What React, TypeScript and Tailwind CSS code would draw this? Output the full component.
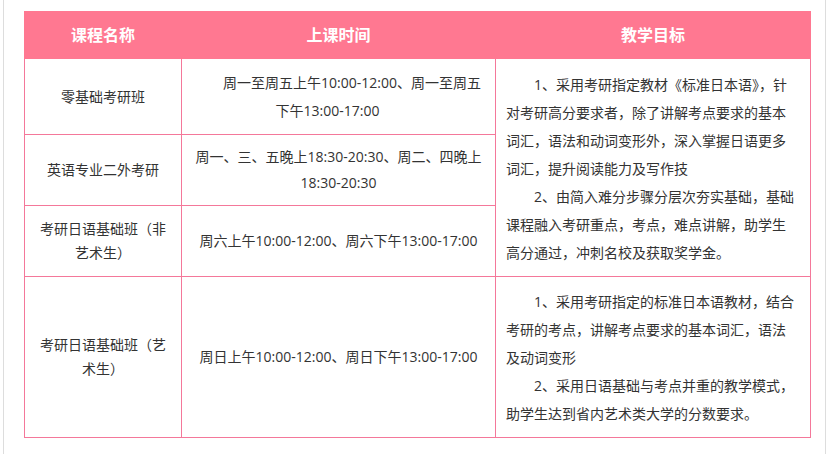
const border = "border border-[#f4789a]";

export default function App() {
  return (
    <div className="ml-[3px] h-[454px] w-[823px] border-x border-[#dddddd] bg-white pl-[20px] pt-[11px] font-['Open_Sans','Noto_Sans_CJK_SC',sans-serif] text-[14px] text-[#333333]">
      <table className="table-fixed border-collapse" style={{ width: 786 }}>
        <colgroup>
          <col className="w-[157px]" />
          <col className="w-[314px]" />
          <col className="w-[315px]" />
        </colgroup>
        <thead>
          <tr className="h-[47px] bg-[#ff7891] text-[16px] font-bold text-white">
            <th className="border border-[#ff7891] text-center">课程名称</th>
            <th className="border border-[#ff7891] text-center">上课时间</th>
            <th className="border border-[#ff7891] text-center">教学目标</th>
          </tr>
        </thead>
        <tbody>
          <tr className="h-[76px]">
            <td className={`${border} px-[12px] text-center align-middle leading-[24px]`}>零基础考研班</td>
            <td className={`${border} px-[8px] text-center align-middle leading-[28px]`}>
              <div className="pl-[27px]">周一至周五上午10:00-12:00、周一至周五</div>
              <div className="pr-[22px]">下午13:00-17:00</div>
            </td>
            <td rowSpan={3} className={`${border} pl-[10px] pr-[13px] pt-[2px] align-middle leading-[28px]`}>
              <p className="indent-[28px]">
                1、采用考研指定教材《标准日本语》，针对考研高分要求者，除了讲解考点要求的基本词汇，语法和动词变形外，深入掌握日语更多词汇，提升阅读能力及写作技
              </p>
              <p className="indent-[28px]">
                2、由简入难分步骤分层次夯实基础，基础课程融入考研重点，考点，难点讲解，助学生高分通过，冲刺名校及获取奖学金。
              </p>
            </td>
          </tr>
          <tr className="h-[71px]">
            <td className={`${border} px-[12px] text-center align-middle leading-[24px]`}>英语专业二外考研</td>
            <td className={`${border} px-[8px] text-center align-middle leading-[26px]`}>
              周一、三、五晚上18:30-20:30、周二、四晚上
              <br />
              18:30-20:30
            </td>
          </tr>
          <tr className="h-[71px]">
            <td className={`${border} px-[12px] text-center align-middle leading-[24px]`}>考研日语基础班（非艺术生）</td>
            <td className={`${border} px-[8px] text-center align-middle leading-[24px]`}>
              周六上午10:00-12:00、周六下午13:00-17:00
            </td>
          </tr>
          <tr className="h-[161px]">
            <td className={`${border} px-[12px] text-center align-middle leading-[24px]`}>考研日语基础班（艺术生）</td>
            <td className={`${border} px-[8px] text-center align-middle leading-[24px]`}>
              周日上午10:00-12:00、周日下午13:00-17:00
            </td>
            <td className={`${border} pl-[10px] pr-[13px] pt-[2px] align-middle leading-[28px]`}>
              <p className="indent-[28px]">
                1、采用考研指定的标准日本语教材，结合考研的考点，讲解考点要求的基本词汇，语法及动词变形
              </p>
              <p className="indent-[28px]">2、采用日语基础与考点并重的教学模式，助学生达到省内艺术类大学的分数要求。</p>
            </td>
          </tr>
        </tbody>
      </table>
    </div>
  );
}
